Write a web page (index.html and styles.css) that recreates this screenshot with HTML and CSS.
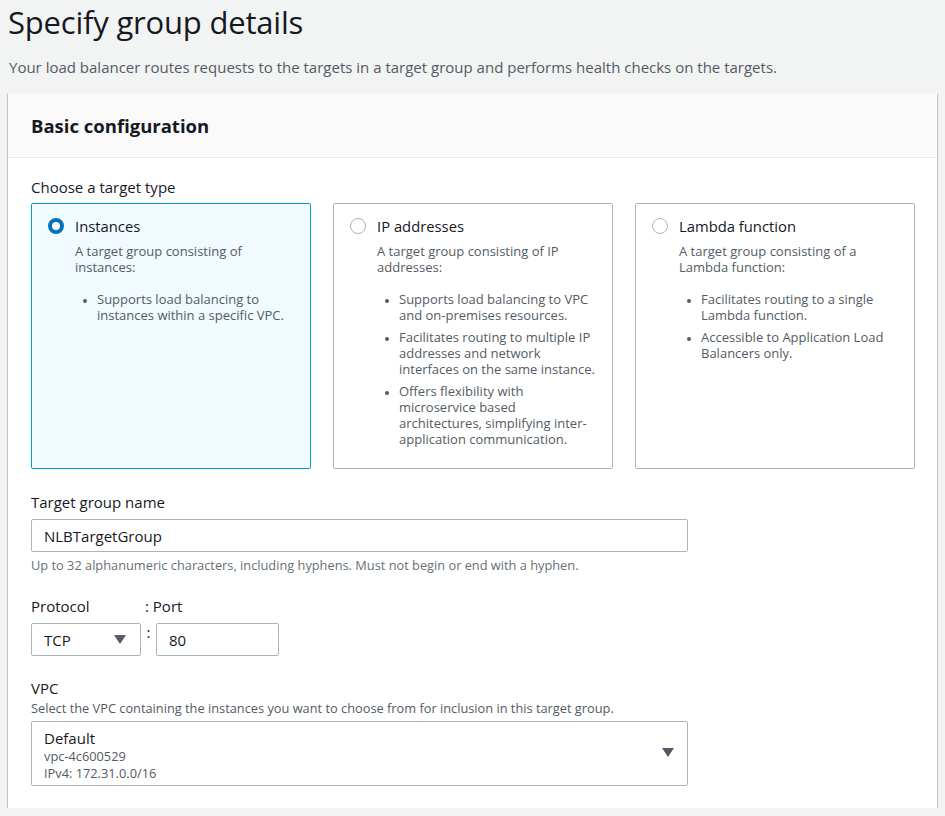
FILE: index.html
```html
<!DOCTYPE html>
<html>
<head>
<meta charset="utf-8">
<link rel="stylesheet" href="styles.css">
</head>
<body>
<div class="page">
  <h1 class="title">Specify group details</h1>
  <p class="subtitle">Your load balancer routes requests to the targets in a target group and performs health checks on the targets.</p>
  <section class="panel">
    <header class="panel-head"><h2>Basic configuration</h2></header>
    <div class="panel-body">
      <div class="label">Choose a target type</div>
      <div class="tiles">
        <div class="tile selected">
          <div class="tile-title"><span class="radio on"></span>Instances</div>
          <div class="tile-desc">
            <p>A target group consisting of instances:</p>
            <ul>
              <li>Supports load balancing to instances within a specific VPC.</li>
            </ul>
          </div>
        </div>
        <div class="tile">
          <div class="tile-title"><span class="radio"></span>IP addresses</div>
          <div class="tile-desc">
            <p>A target group consisting of IP addresses:</p>
            <ul>
              <li>Supports load balancing to VPC and on-premises resources.</li>
              <li>Facilitates routing to multiple IP addresses and network interfaces on the same instance.</li>
              <li>Offers flexibility with microservice based architectures, simplifying inter-application communication.</li>
            </ul>
          </div>
        </div>
        <div class="tile">
          <div class="tile-title"><span class="radio"></span>Lambda function</div>
          <div class="tile-desc">
            <p>A target group consisting of a Lambda function:</p>
            <ul>
              <li>Facilitates routing to a single Lambda function.</li>
              <li>Accessible to Application Load Balancers only.</li>
            </ul>
          </div>
        </div>
      </div>

      <div class="field name-field">
        <div class="label">Target group name</div>
        <div class="input wide">NLBTargetGroup</div>
        <div class="hint">Up to 32 alphanumeric characters, including hyphens. Must not begin or end with a hyphen.</div>
      </div>

      <div class="field proto-field">
        <div class="proto-labels"><span class="label proto-label">Protocol</span><span class="label">: Port</span></div>
        <div class="proto-row">
          <div class="input select proto">TCP<span class="caret"></span></div>
          <span class="colon">:</span>
          <div class="input port">80</div>
        </div>
      </div>

      <div class="field vpc-field">
        <div class="label">VPC</div>
        <div class="desc">Select the VPC containing the instances you want to choose from for inclusion in this target group.</div>
        <div class="input wide vpc">
          <div class="vpc-text">
            <div class="vpc-name">Default</div>
            <div class="vpc-sub">vpc-4c600529</div>
            <div class="vpc-sub">IPv4: 172.31.0.0/16</div>
          </div>
          <span class="caret"></span>
        </div>
      </div>
    </div>
  </section>
</div>
</body>
</html>
```
FILE: styles.css
```css
* { box-sizing: border-box; }
html, body { margin: 0; padding: 0; }
body {
  background: #f2f3f3;
  font-family: "Open Sans", "Liberation Sans", Arial, sans-serif;
  color: #16191f;
  font-size: 15px;
}
.page { padding: 0 8px; }
.title {
  margin: 0;
  padding-top: 3px;
  font-size: 31px;
  font-weight: 400;
  line-height: 38px;
  letter-spacing: -0.2px;
}
.subtitle {
  margin: 16px 0 0 1px;
  font-size: 15px;
  line-height: 20px;
  color: #545b64;
}
.panel {
  margin-top: 16px;
  width: 929px;
  background: #fff;
  box-shadow: 0 1px 1px 0 rgba(0,28,36,0.3), 1px 1px 1px 0 rgba(0,28,36,0.15), -1px 1px 1px 0 rgba(0,28,36,0.15);
}
.panel-head {
  background: #fafafa;
  border-bottom: 1px solid #eaeded;
  height: 65px;
  display: flex;
  align-items: center;
  padding: 0 23px;
}
.panel-head h2 {
  margin: 0;
  font-size: 18.5px;
  font-weight: 700;
  line-height: 22px;
  padding-top: 1px;
}
.panel-body { padding: 19px 22px 22px 23px; }
.label { font-size: 15px; line-height: 20px; color: #16191f; }
.tiles {
  margin-top: 6px;
  display: grid;
  grid-template-columns: 280px 280px 280px;
  column-gap: 22px;
}
.tile {
  height: 266px;
  border: 1px solid #aab7b8;
  border-radius: 2px;
  background: #fff;
  padding: 12px 16px 12px 16px;
}
.tile.selected { background: #f1faff; border-color: #00a1c9; }
.tile-title {
  display: flex;
  align-items: center;
  font-size: 14.8px;
  line-height: 20px;
  color: #16191f;
}
.radio {
  width: 16px; height: 16px;
  border-radius: 50%;
  border: 1px solid #aab7b8;
  background: #fff;
  margin-right: 11px;
  flex: none;
}
.radio.on { border: 4px solid #0073bb; }
.tile-desc {
  padding-left: 27px;
  margin-top: 7px;
  font-size: 13px;
  line-height: 16px;
  color: #545b64;
}
.tile-desc p { margin: 0; }
.tile-desc ul { margin: 16px 0 0; padding-left: 22px; }
.tile-desc li { margin-bottom: 6px; }
.tile-desc li::marker { font-size: 10px; }
.field { margin-top: 22px; }
.name-field { margin-top: 23px; }
.input {
  margin-top: 7px;
  height: 33px;
  border: 1px solid #aab7b8;
  border-radius: 2px;
  background: #fff;
  display: flex;
  align-items: center;
  padding: 0 12px;
  font-size: 15px;
  color: #16191f;
}
.wide { width: 657px; }
.hint { margin-top: 5px; font-size: 12.8px; line-height: 16px; color: #687078; }
.proto-field { margin-top: 23px; }
.proto-labels { display: flex; }
.proto-label { width: 114px; }
.proto-row { display: flex; align-items: flex-start; margin-top: 7px; }
.proto-row .input { margin-top: 0; }
.proto { width: 110px; justify-content: space-between; }
.colon { width: 15px; text-align: center; font-size: 15px; line-height: 18px; margin-top: 0; }
.port { width: 123px; }
.caret {
  width: 0; height: 0;
  border-left: 6px solid transparent;
  border-right: 6px solid transparent;
  border-top: 9px solid #545b64;
  margin-right: 2px;
}
.vpc-field { margin-top: 22px; }
.desc { font-size: 12.8px; line-height: 16px; color: #545b64; margin-top: 2px; }
.vpc {
  height: 65px;
  justify-content: space-between;
  align-items: flex-start;
  margin-top: 5px;
  padding-top: 6px;
}
.vpc-name { font-size: 15px; line-height: 20px; color: #16191f; }
.vpc-sub { font-size: 12.8px; line-height: 17px; color: #545b64; }
.vpc-name + .vpc-sub { margin-top: 0; }
.vpc .caret { margin-right: 1px; margin-top: 20px; }
```
